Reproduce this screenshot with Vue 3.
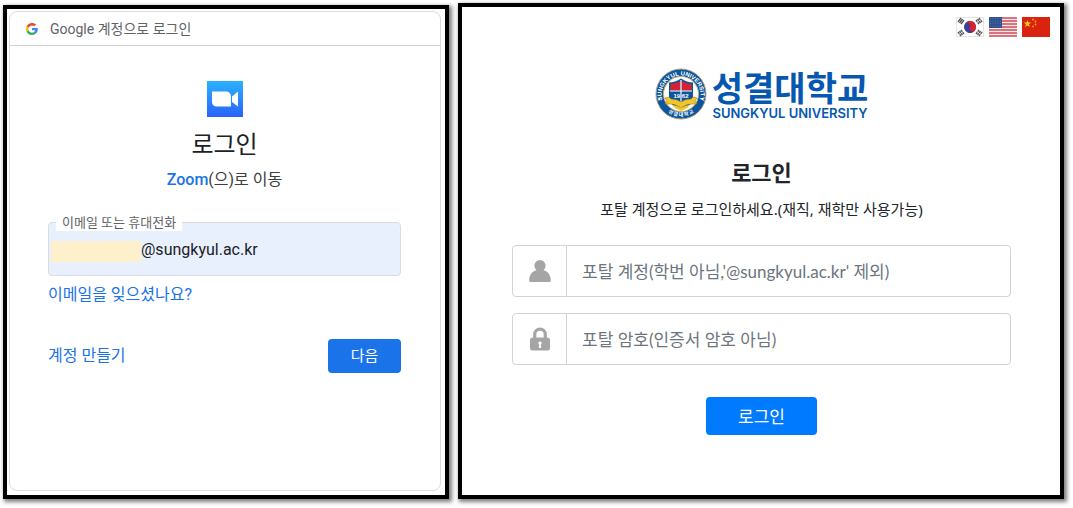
<script setup>
import { ref } from 'vue'

const email = ref('@sungkyul.ac.kr')
const account = ref('')
const password = ref('')
const stripes = [0, 1, 2, 3, 4, 5, 6]
const stars = Array.from({ length: 20 }, (_, i) => ({ x: 2 + (i % 5) * 2.5, y: 2 + Math.floor(i / 5) * 2.5 }))
</script>

<template>
  <main class="page">
    <section class="panel google">
      <div class="card">
        <header class="card-head">
          <svg class="g" viewBox="0 0 48 48" aria-hidden="true">
            <path fill="#EA4335" d="M24 9.500c3.500 0 6.700 1.200 9.200 3.600l6.900-6.900C35.900 2.400 30.500 0 24 0 14.600 0 6.500 5.400 2.600 13.200l8 6.200C12.400 13.700 17.700 9.500 24 9.500z" />
            <path fill="#4285F4" d="M47 24.600c0-1.600-.2-3.100-.4-4.600H24v9h12.900c-.6 3-2.200 5.500-4.700 7.200l7.700 6C44.400 38 47 31.800 47 24.600z" />
            <path fill="#FBBC05" d="M10.500 28.600A14.500 14.500 0 0 1 10.500 19.400l-8-6.200a24 24 0 0 0 0 21.600z" />
            <path fill="#34A853" d="M24 48c6.500 0 11.900-2.100 15.900-5.800l-7.700-6c-2.200 1.500-4.900 2.300-8.200 2.300-6.300 0-11.600-4.200-13.500-9.900l-8 6.200C6.500 42.600 14.600 48 24 48z" />
          </svg>
          <span>Google 계정으로 로그인</span>
        </header>
        <form class="card-body" @submit.prevent>
          <svg class="zoom" viewBox="0 0 36 36" aria-hidden="true">
            <defs>
              <linearGradient id="zoomBlue" x1="0" y1="0" x2="0" y2="1">
                <stop offset="0" stop-color="#2bb2fd" />
                <stop offset="1" stop-color="#2a62fb" />
              </linearGradient>
            </defs>
            <rect width="36" height="36" fill="url(#zoomBlue)" />
            <path fill="#fff" d="M5 10.500h14a5 5 0 0 1 5 5v10H9.500a4.500 4.500 0 0 1-4.500-4.500zM25 15.500l6-5v15l-6-4.500z" />
          </svg>
          <h1>로그인</h1>
          <p class="move"><a href="#">Zoom</a>(으)로 이동</p>
          <div class="email">
            <label for="email">이메일 또는 휴대전화</label>
            <input id="email" v-model="email" type="text" />
            <span class="mask"></span>
          </div>
          <a class="forgot" href="#">이메일을 잊으셨나요?</a>
          <div class="actions">
            <a href="#">계정 만들기</a>
            <button type="submit">다음</button>
          </div>
        </form>
      </div>
    </section>

    <section class="panel portal">
      <nav class="flags">
        <a href="#" aria-label="한국어">
          <svg viewBox="0 0 28 20">
            <rect x=".5" y=".5" width="27" height="19" fill="#fff" stroke="#e4e4e4" />
            <g transform="rotate(25 14 10)">
              <circle cx="14" cy="10" r="6" fill="#3c3f94" />
              <path fill="#d8232f" d="M8 10a6 6 0 0 1 12 0 3 3 0 0 1-6 0 3 3 0 0 0-6 0z" />
            </g>
            <g stroke="#555" stroke-width="1.300">
              <path d="M2 5l3-4M3.500 6l3-4M5 7l3-4" />
              <path d="M20 3l3 4M21.500 2l3 4M23 1l3 4" stroke-dasharray="2.200 .6" />
              <path d="M2 15l3 4M3.500 14l3 4M5 13l3 4" stroke-dasharray="2.200 .6" />
              <path d="M20 17l3-4M21.500 18l3-4M23 19l3-4" stroke-dasharray="2.200 .6" />
            </g>
          </svg>
        </a>
        <a href="#" aria-label="English">
          <svg viewBox="0 0 28 20">
            <rect width="28" height="20" fill="#f8e9eb" />
            <rect v-for="s in stripes" :key="s" x="0" :y="s * 3" width="28" height="2" fill="#d9737d" />
            <rect width="13" height="11" fill="#2f5190" />
            <circle v-for="(p, i) in stars" :key="'s' + i" :cx="p.x - 0.5" :cy="p.y - 0.3" r=".35" fill="#8fa3c6" />
          </svg>
        </a>
        <a href="#" aria-label="中文">
          <svg viewBox="0 0 28 20">
            <rect width="28" height="20" fill="#d9230f" />
            <path fill="#ffce1a" d="M5.500 3l.9 2.600h2.800L7 7.300l.8 2.700-2.300-1.600L3.200 10 4 7.300 1.800 5.600h2.800z" />
            <g fill="#f4a61d"><circle cx="11" cy="2.500" r=".9" /><circle cx="13.500" cy="4.500" r=".9" /><circle cx="13.500" cy="7.500" r=".9" /><circle cx="11" cy="9.500" r=".9" /></g>
          </svg>
        </a>
      </nav>

      <div class="brand">
        <svg class="emblem" viewBox="0 0 52 52" aria-hidden="true">
          <defs>
            <path id="arcTop" d="M8 34.500A19.500 19.500 0 1 1 44 34.500" />
            <path id="arcBottom" d="M5 34A22.500 22.500 0 0 0 47 34" />
          </defs>
          <circle cx="26" cy="26" r="25" fill="#0b559f" stroke="#a8a28a" stroke-width="1" />
          <circle cx="26" cy="26" r="17.500" fill="#fff" stroke="#c9b56a" stroke-width="1" />
          <text class="ring"><textPath href="#arcTop" startOffset="50%" text-anchor="middle">SUNGKYUL UNIVERSITY</textPath></text>
          <text class="ring-ko"><textPath href="#arcBottom" startOffset="50%" text-anchor="middle">성 결 대 학 교</textPath></text>
          <circle cx="4.500" cy="31" r=".9" fill="#fff" /><circle cx="47.500" cy="31" r=".9" fill="#fff" />
          <path fill="#0b559f" d="M14 14.500q6 0 12-4 6 4 12 4V29c0 7-6 10-12 13-6-3-12-6-12-13z" />
          <path fill="#d8222f" d="M15.500 16q5 0 9.800-3v9.500h-9.800zM26.700 13q4.800 3 9.800 3v6.500h-9.800z" />
          <path stroke="#fff" stroke-width="1.200" d="M26 12v29M15 23h22" />
          <path fill="#f0c62c" stroke="#8a6c17" stroke-width=".5" d="M10 30l4-1 2 2q6 0 10 3 4-3 10-3l2-2 4 1-2 3 2 3h-5q-6 0-11 4-5-4-11-4h-5l2-3z" />
          <path fill="#f0c62c" d="M17 37q5 0 9 3 4-3 9-3l-3 3-6 3-6-3z" />
          <text class="year" x="26" y="29.500" text-anchor="middle">19 62</text>
        </svg>
        <div class="names">
          <span class="name-ko">성결대학교</span>
          <span class="name-en">SUNGKYUL UNIVERSITY</span>
        </div>
      </div>

      <h2>로그인</h2>
      <p class="hint">포탈 계정으로 로그인하세요.(재직, 재학만 사용가능)</p>
      <form class="login" @submit.prevent>
        <div class="field">
          <label for="account" aria-label="포탈 계정">
            <svg viewBox="0 0 22 22"><path fill="#a5a5a5" d="M11 0a5.600 5.600 0 0 1 5.600 5.600c0 2-1 3.600-2.100 4.700 4.500 1.200 7.300 4.700 7.300 10.200q0 1.500-1.300 1.500h-19Q.2 22 .2 20.500C.2 15 3 11.500 7.500 10.300 6.400 9.200 5.400 7.600 5.400 5.600A5.600 5.600 0 0 1 11 0z" /></svg>
          </label>
          <input id="account" v-model="account" type="text" placeholder="포탈 계정(학번 아님,'@sungkyul.ac.kr' 제외)" />
        </div>
        <div class="field">
          <label for="password" aria-label="포탈 암호">
            <svg class="lock" viewBox="0 0 22 24">
              <path fill="none" stroke="#a5a5a5" stroke-width="3.200" d="M5.700 12V7.500a5.300 5.300 0 0 1 10.600 0V12" />
              <rect x="1" y="10.500" width="20" height="13" rx="2.500" fill="#a5a5a5" />
              <path fill="#fff" d="M11 14.500a1.700 1.700 0 0 1 .8 3.200l.4 3.300H9.800l.4-3.300a1.700 1.700 0 0 1 .8-3.200z" />
            </svg>
          </label>
          <input id="password" v-model="password" type="password" placeholder="포탈 암호(인증서 암호 아님)" />
        </div>
        <button type="submit">로그인</button>
      </form>
    </section>
  </main>
</template>

<style>
body { background: #fff; }
</style>

<style scoped>
* { box-sizing: border-box; }
.page {
  display: grid;
  grid-template-columns: 446fr 606fr;
  gap: 9px;
  min-height: 100vh;
  padding: 3px 9px 9px 3px;
  font-family: Roboto, "Noto Sans CJK KR", sans-serif;
}
.panel {
  border: 4px solid #000;
  background: #fff;
  box-shadow: 2px 2px 4px 1px rgba(0, 0, 0, .5);
}
h1, h2, p { margin: 0; }
a { color: #1a73e8; text-decoration: none; }
button { border: 0; color: #fff; font-family: inherit; cursor: pointer; }
input { font-family: inherit; outline: 0; }

.google { display: flex; margin-top: 2px; padding: 2px 4px 4px 2px; }
.card { flex: 1; border: 1px solid #dadce0; border-radius: 8px; }
.card-head {
  display: flex;
  align-items: center;
  gap: 12px;
  height: 34px;
  padding-left: 16px;
  border-bottom: 1px solid #d0d2d5;
  color: #5f6368;
  font-size: 14px;
  line-height: 20px;
}
.g { width: 12px; height: 12px; }
.card-body { display: flex; flex-direction: column; padding: 35px 39px 0 38px; }
.zoom { width: 36px; height: 36px; align-self: center; }
h1 { margin-top: 12px; text-align: center; font-size: 24px; font-weight: 400; line-height: 32px; color: #202124; }
.move { margin-top: 7px; text-align: center; font-size: 16px; line-height: 24px; color: #3c4043; }
.move a { font-weight: 500; }
.email { position: relative; margin-top: 30px; }
.email label {
  position: absolute;
  left: 8px;
  top: -7px;
  padding: 0 6px;
  background: #fff;
  color: #5f6368;
  font-size: 13px;
  line-height: 16px;
}
.email input {
  display: block;
  width: 100%;
  height: 54px;
  padding: 0 12px 0 92px;
  border: 1px solid #d9dce1;
  border-radius: 4px;
  background: #e8f0fe;
  color: #202124;
  font-size: 16px;
}
.mask { position: absolute; left: 3px; top: 19px; width: 90px; height: 21px; background: #fff0cc; }
.forgot { margin-top: 9px; font-size: 16px; line-height: 20px; }
.actions { display: flex; align-items: center; justify-content: space-between; margin-top: 34px; font-size: 16px; line-height: 20px; }
.actions button { width: 73px; height: 34px; padding: 0 0 4px; border-radius: 4px; background: #1a73e8; font-size: 15px; }

.portal {
  display: flex;
  flex-direction: column;
  padding: 10px 49px 0 50px;
  font-family: "Noto Sans", "Noto Sans CJK KR", sans-serif;
  color: #212529;
}
.flags { display: flex; justify-content: flex-end; gap: 5px; margin-right: -39px; }
.flags a, .flags svg { display: block; width: 28px; height: 20px; }
.brand { display: flex; align-items: center; justify-content: center; gap: 5px; margin-top: 31px; }
.emblem { width: 52px; height: 52px; }
.ring { fill: #fff; font: 700 6px "Liberation Sans", sans-serif; }
.ring-ko { fill: #fff; font: 700 5px "Noto Sans CJK KR", sans-serif; }
.year { fill: #fff; font: 700 6px "Liberation Sans", sans-serif; }
.names { display: flex; flex-direction: column; align-items: center; color: #0657b0; }
.name-ko { font: 700 34px/38px "Noto Sans CJK KR", sans-serif; }
.name-en { font: 600 13px/14px Inter, sans-serif; }
h2 { margin-top: 38px; text-align: center; font-size: 22px; font-weight: 700; line-height: 28px; }
.hint { margin-top: 13px; text-align: center; font-size: 15px; line-height: 20px; }
.login { display: flex; flex-direction: column; gap: 16px; margin-top: 26px; }
.field { display: flex; height: 52px; border: 1px solid #ced4da; border-radius: 4px; }
.field label { display: flex; align-items: center; justify-content: center; width: 54px; border-right: 1px solid #ced4da; }
.field svg { width: 22px; height: 22px; }
.field .lock { height: 24px; }
.field input {
  flex: 1;
  min-width: 0;
  padding: 0 15px;
  border: 0;
  border-radius: 4px;
  background: none;
  color: #495057;
  font-family: Lato, "Noto Sans CJK KR", sans-serif;
  font-size: 17px;
}
.field input::placeholder { color: #6c757d; opacity: 1; }
.login button { align-self: center; width: 111px; height: 38px; margin-top: 16px; padding: 0 0 2px; border-radius: 4px; background: #007bff; font-size: 17px; }
</style>
